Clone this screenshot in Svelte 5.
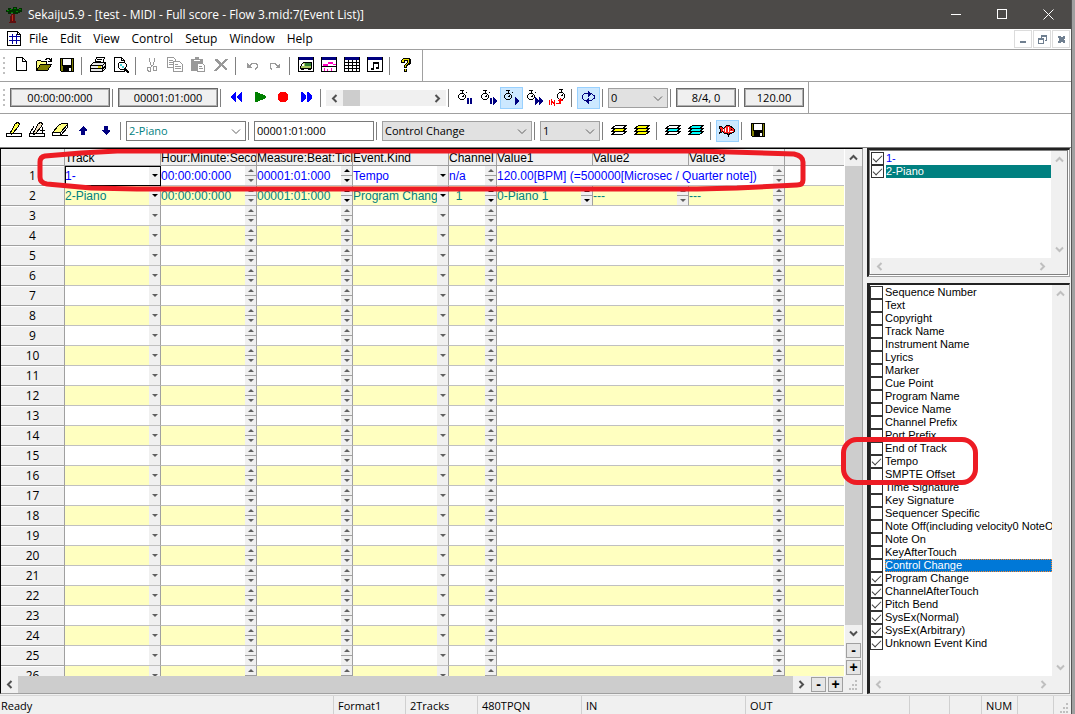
<script lang="ts">
type Shape = [d: string, fill?: string, stroke?: string];

const watch = 'M3.5 4.5h3l2 2v2l-2 2h-3l-2-2v-2zM3 1.5h4M5.5 2v2M9 3.5h1M5 7.5h1l1-1';

const icons: Record<string, Shape[]> = {
    tree: [
        ['M0 3h2V1h3v1h2V0h4v2h2V1h3v4h-2v1h-2v1h-3V5H9v2H7V5H5v2H2V5H0z', '#003000'],
        ['M1 3h2v1H1zM4 2h2v1H4zM8 1h2v1H8zM13 2h2v1h-2zM10 4h2v1h-2zM5 5h2v1H5z', '#008000'],
        ['M5 7h4v7h1v2H3v-1h1v-3z', '#601010'],
        ['M6 8h1v6H6z', '#c02818'],
    ],
    score: [
        ['M.5.5h10l3 3v11H.5z', '#fff', '#000'],
        ['M10.5.5v3h3', '', '#000'],
        ['M2 5.5h11M2 9.5h11M5.5 3v10M9.5 3v10', '', '#0000a0'],
    ],
    new: [
        ['M3.5.5h6l4 4v9h-10z', '#fff', '#000'],
        ['M9.5.5v4h4', '', '#000'],
    ],
    open: [
        ['M.5 13V4.5l1-1h3l1 1h5v3', '#ffff80', '#000'],
        ['M.5 13.5l4-6h11l-4 6z', '#808000', '#000'],
        ['M9 2.5h1v-1h3v1h1v1M15.5 1v3.5H12', '', '#000'],
    ],
    save: [
        ['M1.5 1.5h13v13h-12l-1-1z', '#808000', '#000'],
        ['M4 2h8v6H4z', '#fff'],
        ['M4 9h9v6H4z', '#000'],
        ['M10 11h2v3h-2z', '#fff'],
        ['M3.5 2v6.5h9V2', '', '#000'],
    ],
    print: [
        ['M4.5 6.5l2-6h8l-2 6z', '#fff', '#000'],
        ['M7 2.5h5M6 4.5h5', '', '#000'],
        ['M.5 8.5l3-3h12v6l-3 3H.5z', '#e8e8e8', '#000'],
        ['M.5 8.5h12l3-3M12.5 8.5v6M1 11.5h11M13 11.5l3-3', '', '#000'],
        ['M8 9h3v2H8z', '#d8d000'],
    ],
    preview: [
        ['M1.5.5h7l3 3v11h-10z', '#fff', '#000'],
        ['M8.5.5v3h3', '', '#000'],
        ['M7 5h4l2 2v3l-2 2H7l-2-2V7z', '#fff', '#000'],
        ['M7 7h2v2H7zM9 9h2v2H9z', '#40d0d8'],
        ['M11 11h2v1h1v1h1v1h1v2h-2v-1h-1v-1h-1v-1h-1z', '#000'],
    ],
    cut: [
        ['M5.5 1v3.5l1 1v2l2 2M10.5 1v3.5l-1 1v2l-3 3', '', '#999'],
        ['M4.5 10h2v4h-2l-1-1v-2zM9.5 9h2l1 1v3h-3z', '', '#999'],
    ],
    copy: [
        ['M.5.5h6l2 2v8h-8z', '#fff', '#999'],
        ['M6.5 4.5h6l3 3v7h-9z', '#fff', '#999'],
        ['M2 3.5h4M2 5.5h4M2 7.5h4M8 7.5h3M8 9.5h6M8 11.5h6', '', '#999'],
    ],
    paste: [
        ['M1 2h4V0h4v2h4v4H7v8H1V3z', '#999'],
        ['M4 3h6v1H4z', '#fff'],
        ['M7.5 6.5h5l2 2v6h-7z', '#fff', '#999'],
        ['M9 9.5h3M9 11.5h4', '', '#999'],
    ],
    erase: [['M2 2h2l4 4 5-4h2v1l-5 4 4 5v1h-2L8 9l-5 5H1v-1l5-5-4-5z', '#999']],
    undo: [
        ['M3 6v5h5z', '#999'],
        ['M5 9.5l3-3h4l1 1v3l-2 2', '', '#999'],
    ],
    redo: [
        ['M13 6v5H8z', '#999'],
        ['M11 9.5l-3-3H4l-1 1v3l2 2', '', '#999'],
    ],
    trackList: [
        ['M.5.5h15v14H.5z', '#fff', '#000'],
        ['M1 0h14v3H1z', '#000080'],
        ['M2.5 9.5l3-4h8v6h-11z', '#a8c860', '#000'],
        ['M7 6h6v3H7z', '#308030'],
        ['M4 7h2v2H4z', '#fff'],
        ['M3 11h3v2H3zM10 11h3v2h-3z', '#000'],
    ],
    pianoRoll: [
        ['M.5.5h15v14H.5z', '#fff', '#000'],
        ['M1 0h14v3H1z', '#000080'],
        ['M2 7h5v2H2zM7 5h5v2H7zM12 7h3v1h-3z', '#ff00c0'],
        ['M1 9.5h14', '', '#000'],
        ['M3 11h1v3H3zM6 12h1v2H6zM10 11h1v3h-1z', '#ff00c0'],
    ],
    eventList: [
        ['M.5.5h15v14H.5z', '#fff', '#000'],
        ['M1 0h14v3H1z', '#000080'],
        ['M1 5.5h14M1 8.5h14M1 11.5h14M4.5 3v11M8.5 3v11M12.5 3v11', '', '#000'],
    ],
    notation: [
        ['M.5.5h15v14H.5z', '#fff', '#000'],
        ['M1 0h14v3H1z', '#000080'],
        ['M6 5h6v7H9v-2h2V7H7v6H4v-2h2z', '#000'],
    ],
    help: [
        ['M5 1h6l2 2v4L9 9v2H6V8l3-2V4H7v2H3V3z', '#000'],
        ['M6 2h4l1 1v3L8 8v2H7V8l3-3V3H6v2H4V3z', '#e8e000'],
        ['M6 12h3v3H6z', '#000'],
        ['M7 12h1v2H7z', '#e8e000'],
    ],
    rewind: [['M7 3v10H6l-4-4V7l4-4zM13 3v10h-1L8 9V7l4-4z', '#0000ff']],
    play: [['M3 3h2l9 4v2l-9 4H3z', '#008000']],
    record: [['M6 3h4l3 2v6l-3 2H6l-3-2V5z', '#ff0000']],
    forward: [['M3 3v10h1l4-4V7L4 3zM9 3v10h1l4-4V7l-4-4z', '#0000ff']],
    watchPause: [
        [watch, '', '#000'],
        ['M10 9h2v6h-2zM13 9h2v6h-2z', '#000080'],
    ],
    watchStep: [
        [watch, '', '#000'],
        ['M10 9h2v6h-2zM13 8l4 4-4 4z', '#000080'],
    ],
    watchPlay: [
        [watch, '', '#000'],
        ['M12 8l4 4-4 4z', '#000080'],
    ],
    watchFast: [
        [watch, '', '#000'],
        ['M9 8l4 4-4 4zM13 8l4 4-4 4z', '#000080'],
    ],
    watchIn: [
        ['M10.5 3.5h3l2 2v3l-2 2h-3l-2-2v-3zM10 .5h4M12.5 1v2M12 6.5h1l1-1', '', '#000'],
        ['M.5 11v5M2.5 16v-5l3 5v-5', '', '#ff0000'],
        ['M7 14h3v-2H8l3-3 3 3h-2v3H7z', '#ff0000'],
    ],
    loop: [
        ['M6 11.5H5l-3-2v-3l3-2h6l3 2v3l-3 2H9', '', '#000080'],
        ['M8 2l3 3-3 3zM9 8v7l-4-3z', '#000080'],
    ],
    pencil: [
        ['M4.5 10.5l5-9 2-1 2 1-1 3-6 7-2 1z', '#ffff40', '#000'],
        ['M.5 11.5h15v3H.5zM4 11.5l2 1', '#fff', '#000'],
    ],
    pencilPlus: [
        ['M.5 11.5h15v3H.5z', '#fff', '#000'],
        ['M4.5 10.5l5-9 2-1 2 1-1 3-6 7-2 1z', '#f0e0c0', '#000'],
        ['M1 11l4-7M13.5 5v6M11 8.5h5', '', '#000'],
    ],
    eraser: [
        ['M.5 10.5l6-7 3-2h6v2l-7 8z', '#ffff80', '#000'],
        ['M.5 10.5h8v3h-8zM8.5 13.5h7M8.5 10.5l7-8v3l-7 8', '#fff', '#000'],
    ],
    up: [['M8 4l4 4v1h-2v4H6V9H4V8z', '#000080']],
    down: [['M8 13l4-4V8h-2V4H6v4H4v1z', '#000080']],
    layerYellow: [
        ['M4.5 9.5h11l-4 3h-11z', '#fff', '#000'],
        ['M4.5 6.5h11l-4 3h-11z', '#ffff00', '#000'],
        ['M4.5 3.5h11l-4 3h-11z', '#fff', '#000'],
    ],
    layersYellow: [
        ['M4.5 9.5h11l-4 3h-11z', '#ffff00', '#000'],
        ['M4.5 6.5h11l-4 3h-11z', '#ffff00', '#000'],
        ['M4.5 3.5h11l-4 3h-11z', '#ffff00', '#000'],
    ],
    layerCyan: [
        ['M4.5 9.5h11l-4 3h-11z', '#fff', '#000'],
        ['M4.5 6.5h11l-4 3h-11z', '#00ffff', '#000'],
        ['M4.5 3.5h11l-4 3h-11z', '#fff', '#000'],
    ],
    layersCyan: [
        ['M4.5 9.5h11l-4 3h-11z', '#00ffff', '#000'],
        ['M4.5 6.5h11l-4 3h-11z', '#00ffff', '#000'],
        ['M4.5 3.5h11l-4 3h-11z', '#00ffff', '#000'],
    ],
    fish: [
        ['M.5 4.5h2l2 2 3-3h3l1 1 2 1 2 2v2l-3 2h-2l-1 2-1-2h-3l-2-2-3 2 1-3z', '#ff2020', '#000'],
        ['M6 6h1v4H6zM9 5h1v5H9zM4 7h1v2H4zM11 9h3v1h-3z', '#fff'],
        ['M12 7h1v1h-1z', '#000'],
    ],
};

const menus = ['File', 'Edit', 'View', 'Control', 'Setup', 'Window', 'Help'];
const mainTools = ['new', 'open', 'save', '|', 'print', 'preview', '|', 'cut', 'copy', 'paste', 'erase', '|', 'undo', 'redo', '|', 'trackList', 'pianoRoll', 'eventList', 'notation', '|', 'help'];
const playTools = ['rewind', 'play', 'record', 'forward', '|'];
const syncTools = ['watchPause', 'watchStep', 'watchPlay', 'watchFast', 'watchIn', '|', 'loop', '|'];
const editTools = ['pencil', 'pencilPlus', 'eraser', 'up', 'down', '|'];
const layerTools = ['|', 'layerYellow', 'layersYellow', '|', 'layerCyan', 'layersCyan', '|', 'fish', '|', 'save'];
const pressed = ['watchPlay', 'loop', 'fish'];

const columns = ['Track', 'Hour:Minute:Second', 'Measure:Beat:Tick', 'Event.Kind', 'Channel', 'Value1', 'Value2', 'Value3'];

interface Cell {
    text?: string;
    kind: 'drop' | 'spin';
    on?: boolean;
    span?: number;
}

const events: Cell[][] = [
    [
        { text: '1-', kind: 'drop', on: true },
        { text: '00:00:00:000', kind: 'spin' },
        { text: '00001:01:000', kind: 'spin', on: true },
        { text: 'Tempo', kind: 'drop', on: true },
        { text: 'n/a', kind: 'spin' },
        { text: '120.00[BPM] (=500000[Microsec / Quarter note])', kind: 'spin', span: 3 },
    ],
    [
        { text: '2-Piano', kind: 'drop', on: true },
        { text: '00:00:00:000', kind: 'spin' },
        { text: '00001:01:000', kind: 'spin', on: true },
        { text: 'Program Change', kind: 'drop', on: true },
        { text: '\u00a0\u00a01', kind: 'spin', on: true },
        { text: '0-Piano 1', kind: 'spin', on: true },
        { text: '---', kind: 'spin' },
        { text: '---', kind: 'spin' },
    ],
];
const blank: Cell[] = [{ kind: 'drop' }, { kind: 'spin' }, { kind: 'spin' }, { kind: 'drop' }, { kind: 'spin' }, { kind: 'spin', span: 3 }];
const rows = Array.from({ length: 26 }, (_, i) => events[i] ?? blank);

const kindNames = [
    'Sequence Number', 'Text', 'Copyright', 'Track Name', 'Instrument Name', 'Lyrics', 'Marker',
    'Cue Point', 'Program Name', 'Device Name', 'Channel Prefix', 'Port Prefix', 'End of Track',
    'Tempo', 'SMPTE Offset', 'Time Signature', 'Key Signature', 'Sequencer Specific',
    'Note Off(including velocity0 NoteOn)', 'Note On', 'KeyAfterTouch', 'Control Change',
    'Program Change', 'ChannelAfterTouch', 'Pitch Bend', 'SysEx(Normal)', 'SysEx(Arbitrary)',
    'Unknown Event Kind',
];

let tracks = $state([
    { name: '1-', checked: true },
    { name: '2-Piano', checked: true },
]);
let kinds = $state(kindNames.map((name, i) => ({ name, checked: i === 13 || i > 21 })));
let position = $state('00001:01:000');
</script>

{#snippet icon(name: string)}
    <svg class="icon" width="16" height="16" viewBox="0 0 16 16" aria-hidden="true">
        {#each icons[name] as [d, fill, stroke]}
            <path {d} fill={fill || 'none'} stroke={stroke || 'none'} />
        {/each}
    </svg>
{/snippet}

{#snippet tools(names: string[])}
    {#each names as name}
        {#if name === '|'}
            <span class="sep"></span>
        {:else}
            <button class="tool" class:pressed={pressed.includes(name)} aria-label={name}>{@render icon(name)}</button>
        {/if}
    {/each}
{/snippet}

{#snippet arrow(dir: 'up' | 'down' | 'left' | 'right')}
    <button class="arrow {dir}" aria-label="Scroll {dir}">
        <svg width="9" height="9" viewBox="0 0 9 9"><path d="M1 6.5l3.5-3.5 3.5 3.5" /></svg>
    </button>
{/snippet}

{#snippet grip()}
    <svg class="grip" width="12" height="12" viewBox="0 0 12 12" aria-hidden="true">
        <path d="M8 1h2v2H8zM5 5h2v2H5zM8 5h2v2H8zM2 9h2v2H2zM5 9h2v2H5zM8 9h2v2H8z" />
    </svg>
{/snippet}

{#snippet combo(label: string, value: string, kind: string)}
    <span class="combo {kind}">
        <select aria-label={label}><option>{value}</option></select>
        <svg width="10" height="6" viewBox="0 0 10 6" aria-hidden="true"><path d="M1 .5l4 4 4-4" /></svg>
    </span>
{/snippet}

<div class="window">
    <header class="titlebar">
        {@render icon('tree')}
        <h1>Sekaiju5.9 - [test - MIDI - Full score - Flow 3.mid:7(Event List)]</h1>
        <button aria-label="Minimize"><svg width="11" height="11"><path d="M0 5.5h10" /></svg></button>
        <button aria-label="Maximize"><svg width="11" height="11"><path d="M.5.5h9v9h-9z" /></svg></button>
        <button aria-label="Close"><svg class="smooth" width="11" height="11"><path d="M.5.5l10 10M10.5.5l-10 10" /></svg></button>
    </header>

    <nav class="menubar">
        {@render icon('score')}
        {#each menus as menu}
            <button class="menu">{menu}</button>
        {/each}
        <div class="mdi">
            <button aria-label="Minimize document"><svg width="9" height="9"><path d="M1 6h6v2H1z" /></svg></button>
            <button aria-label="Restore document">
                <svg width="9" height="9"><path d="M3 0h6v6H7V5h1V2H4v1H3zM0 3h6v6H0zM1 5v3h4V5z" fill-rule="evenodd" /></svg>
            </button>
            <button aria-label="Close document"><svg width="9" height="9"><path d="M1 1h2l1 1h1l1-1h2v2L7 4v1l1 1v2H6L5 7H4L3 8H1V6l1-1V4L1 3z" /></svg></button>
        </div>
    </nav>

    <div class="toolbar">
        <div class="band banded">
            <span class="handle"></span>
            {@render tools(mainTools)}
        </div>
    </div>

    <div class="toolbar">
        <div class="band banded">
            <span class="handle"></span>
            <output class="readout wide">00:00:00:000</output>
            <span class="sep"></span>
            <output class="readout wide">00001:01:000</output>
            <span class="sep"></span>
            {@render tools(playTools)}
            <div class="seek">
                {@render arrow('left')}
                <input type="range" min="0" max="100" value="0" aria-label="Song position" />
                {@render arrow('right')}
            </div>
            <span class="sep"></span>
            {@render tools(syncTools)}
            {@render combo('Loop', '0', 'short')}
            <span class="sep"></span>
            <output class="readout">8/4, 0</output>
            <span class="sep"></span>
            <output class="readout">120.00</output>
        </div>
    </div>

    <div class="toolbar last">
        <div class="band">
            {@render tools(editTools)}
            {@render combo('Track', '2-Piano', 'track')}
            <span class="sep"></span>
            <input class="position" type="text" aria-label="Position" bind:value={position} />
            <span class="sep"></span>
            {@render combo('Event kind', 'Control Change', 'long')}
            <span class="sep"></span>
            {@render combo('Channel', '1', 'short')}
            {@render tools(layerTools)}
        </div>
    </div>

    <main class="workspace">
        <section class="editor">
            <div class="upper">
                <div class="sheet">
                    <table>
                        <colgroup>
                            <col class="c-num" /><col class="c-std" /><col class="c-std" /><col class="c-std" /><col class="c-std" />
                            <col class="c-chan" /><col class="c-std" /><col class="c-std" /><col class="c-std" /><col />
                        </colgroup>
                        <thead>
                            <tr>
                                <th></th>
                                {#each columns as column}
                                    <th>{column}</th>
                                {/each}
                                <th class="rest"></th>
                            </tr>
                        </thead>
                        <tbody>
                            {#each rows as row, r}
                                <tr class:first={r === 0}>
                                    <th scope="row">{r + 1}</th>
                                    {#each row as cell, c}
                                        <td colspan={cell.span ?? 1} class:current={r === 0 && c === 0}>
                                            <div class="cell" class:on={cell.on}>
                                                <span>{cell.text ?? ''}</span>
                                                {#if cell.kind === 'drop'}
                                                    <button class="drop" aria-label="Choose"><i class="tri-down"></i></button>
                                                {:else}
                                                    <div class="spin">
                                                        <button aria-label="Increase"><i class="tri-up"></i></button>
                                                        <button aria-label="Decrease"><i class="tri-down"></i></button>
                                                    </div>
                                                {/if}
                                            </div>
                                        </td>
                                    {/each}
                                    <td class="rest"></td>
                                </tr>
                            {/each}
                        </tbody>
                    </table>
                </div>
                <div class="scroll-y">
                    {@render arrow('up')}
                    <div class="thumb"></div>
                    {@render arrow('down')}
                    <button class="zoom" aria-label="Zoom out rows">-</button>
                    <button class="zoom" aria-label="Zoom in rows">+</button>
                </div>
            </div>
            <div class="scroll-x">
                {@render arrow('left')}
                <div class="thumb"></div>
                {@render arrow('right')}
                <button class="zoom" aria-label="Zoom out columns">-</button>
                <button class="zoom" aria-label="Zoom in columns">+</button>
                <div class="corner">{@render grip()}</div>
            </div>
            <svg class="mark-row" width="770" height="44" viewBox="0 0 770 44" aria-hidden="true">
                <path d="M8 7L44 4 80 2H660L757 5Q766 7 766 13V31Q766 36 760 36L700 39 660 40H100L54 39 10 35Q3 34 3 28V13Q3 8 8 7Z" />
            </svg>
        </section>

        <aside class="side">
            <div class="listbox tracks">
                <div class="upper">
                    <ul>
                        {#each tracks as track, i}
                            <li class:picked={i === 1}>
                                <label><input type="checkbox" bind:checked={track.checked} /><span>{track.name}</span></label>
                            </li>
                        {/each}
                    </ul>
                    <div class="scroll-y idle">{@render arrow('up')}{@render arrow('down')}</div>
                </div>
                <div class="scroll-x idle">{@render arrow('left')}{@render arrow('right')}</div>
            </div>
            <div class="listbox kinds">
                <div class="upper">
                    <ul>
                        {#each kinds as kind}
                            <li class:picked={kind.name === 'Control Change'}>
                                <label><input type="checkbox" bind:checked={kind.checked} /><span>{kind.name}</span></label>
                            </li>
                        {/each}
                    </ul>
                    <div class="scroll-y idle">{@render arrow('up')}{@render arrow('down')}</div>
                </div>
                <div class="scroll-x idle">{@render arrow('left')}{@render arrow('right')}</div>
                <div class="mark-kind"></div>
            </div>
        </aside>
    </main>

    <footer class="status">
        <span class="ready">Ready</span>
        <span class="s72">Format1</span>
        <span class="s72">2Tracks</span>
        <span class="s104">480TPQN</span>
        <span class="s164">IN</span>
        <span class="s164">OUT</span>
        <span class="s40"></span>
        <span class="s32"></span>
        <span class="s36">NUM</span>
        <span class="s36"></span>
        <span class="s18">{@render grip()}</span>
    </footer>
</div>

<style>
    :global(body) {
        margin: 0;
        background: #a0a0a0;
    }

    .window {
        box-sizing: border-box;
        height: 100vh;
        margin-right: 3px;
        border-right: 1px solid #555;
        display: flex;
        flex-direction: column;
        background: #f0f0f0;
        color: #000;
        font: 12px/16px "Open Sans", "Noto Sans", sans-serif;
        overflow: hidden;
    }

    button {
        padding: 0;
        margin: 0;
        border: 0;
        background: none;
        color: inherit;
        font: inherit;
        display: flex;
        align-items: center;
        justify-content: center;
    }

    svg {
        display: block;
        flex: none;
        shape-rendering: crispEdges;
    }

    .icon {
        overflow: visible;
    }

    /* title and menu */
    .titlebar {
        flex: none;
        height: 29px;
        padding-left: 6px;
        display: flex;
        align-items: center;
        background: #4c4a48;
        color: #fff;
        h1 {
            flex: 1;
            margin: 0 0 0 6px;
            font-size: 12px;
            font-weight: 400;
            line-height: 18px;
            white-space: nowrap;
        }
        button {
            width: 46px;
            height: 27px;
        }
        button svg {
            fill: none;
            stroke: #fff;
        }
        .smooth {
            shape-rendering: auto;
        }
    }

    .menubar {
        flex: none;
        height: 20px;
        padding-left: 7px;
        display: flex;
        align-items: center;
        background: #fff;
        border-bottom: 1px solid #a0a0a0;
    }

    .menu {
        padding: 0 6px;
    }

    .mdi {
        margin-left: auto;
        padding-right: 1px;
        display: flex;
        gap: 1px;
        button {
            width: 18px;
            height: 18px;
            border: 1px solid #dcdcdc;
        }
        svg {
            fill: #6f7f90;
        }
    }

    /* toolbars */
    .toolbar {
        flex: none;
        height: 31px;
        background: #fff;
        border-bottom: 1px solid #a0a0a0;
        display: flex;
    }

    .toolbar.last {
        height: 33px;
        border-bottom-color: #808080;
        .band {
            padding-left: 3px;
        }
    }

    .band {
        display: flex;
        align-items: center;
    }

    .banded {
        padding: 0 4px 0 3px;
        border-right: 1px solid #a0a0a0;
    }

    .handle {
        width: 2px;
        height: 18px;
        margin-right: 5px;
        background: repeating-linear-gradient(#c0c0c0 0 2px, #fff 2px 5px);
    }

    .sep {
        width: 1px;
        height: 18px;
        margin: 0 5px 0 2px;
        background: #808080;
    }

    .tool {
        box-sizing: border-box;
        width: 23px;
        height: 22px;
        padding: 0 2px 1px 0;
    }

    .pressed {
        background: #cce8ff;
        border: 1px solid #99d1ff;
    }

    .readout {
        box-sizing: border-box;
        width: 60px;
        height: 19px;
        border: 1px solid #696969;
        outline: 1px solid #b0b0b0;
        outline-offset: -2px;
        background: #f0f0f0;
        line-height: 17px;
        font-size: 11px;
        text-align: center;
    }

    .readout.wide {
        width: 100px;
    }

    .combo {
        position: relative;
        height: 20px;
        svg {
            position: absolute;
            right: 5px;
            top: 8px;
            fill: none;
            stroke: #606060;
            shape-rendering: auto;
            pointer-events: none;
        }
        select {
            box-sizing: border-box;
            width: 100%;
            height: 20px;
            padding: 0 2px;
            appearance: none;
            border: 1px solid #a0a0a0;
            border-radius: 0;
            background: #e1e1e1;
            color: #000;
            font: 11px/18px "Open Sans", "Noto Sans", sans-serif;
        }
    }

    .short {
        width: 60px;
    }

    .long {
        width: 150px;
    }

    .track {
        width: 120px;
        select {
            background: #fff;
            border-color: #7a7a7a;
            color: #008080;
        }
    }

    .position {
        box-sizing: border-box;
        width: 120px;
        height: 20px;
        padding: 0 2px;
        border: 1px solid #7a7a7a;
        font: 11px/18px "Open Sans", "Noto Sans", sans-serif;
    }

    .seek {
        width: 120px;
        height: 16px;
        display: flex;
        background: #f0f0f0;
        input {
            flex: 1;
            min-width: 0;
            margin: 0;
            appearance: none;
            background: none;
        }
        input::-webkit-slider-thumb {
            appearance: none;
            width: 17px;
            height: 16px;
            background: #cdcdcd;
        }
    }

    /* scroll bars */
    .arrow {
        flex: none;
        width: 17px;
        height: 17px;
        svg {
            fill: none;
            stroke: #505050;
            stroke-width: 2;
            shape-rendering: auto;
        }
    }

    .idle .arrow svg {
        stroke: #bfbfbf;
    }

    .down svg {
        transform: rotate(180deg);
    }

    .left svg {
        transform: rotate(-90deg);
    }

    .right svg {
        transform: rotate(90deg);
    }

    .scroll-y {
        flex: none;
        width: 17px;
        display: flex;
        flex-direction: column;
        align-items: center;
        background: #f0f0f0;
    }

    .scroll-x {
        flex: none;
        height: 17px;
        display: flex;
        align-items: center;
        background: #f0f0f0;
    }

    .idle {
        justify-content: space-between;
    }

    .scroll-x.idle {
        padding-right: 17px;
    }

    .thumb {
        flex: 1;
        align-self: stretch;
        background: #cdcdcd;
    }

    .zoom {
        box-sizing: border-box;
        width: 15px;
        height: 15px;
        margin: 1px;
        border: 1px solid #a0a0a0;
        background: #e6e6e6;
        font: bold 14px/13px "Liberation Sans", sans-serif;
    }

    .corner {
        width: 18px;
        display: flex;
        justify-content: center;
    }

    .grip {
        fill: #bfbfbf;
    }

    /* event sheet */
    .workspace {
        flex: 1;
        min-height: 0;
        display: flex;
        gap: 4px;
        padding-right: 1px;
        font: 12px/16px "Liberation Sans", Arial, sans-serif;
    }

    .editor {
        position: relative;
        flex: 1;
        min-width: 0;
        display: flex;
        flex-direction: column;
        border: 1px solid #a0a0a0;
        border-top-color: #000;
        border-left-color: #000;
    }

    .upper {
        flex: 1;
        min-height: 0;
        display: flex;
    }

    .sheet {
        flex: 1;
        min-width: 0;
        overflow: hidden;
        background: #fff;
        border-right: 1px solid #fff;
    }

    table {
        width: 100%;
        table-layout: fixed;
        border-collapse: separate;
        border-spacing: 0;
    }

    .c-num {
        width: 64px;
    }

    .c-std {
        width: 96px;
    }

    .c-chan {
        width: 48px;
    }

    th,
    td {
        box-sizing: border-box;
        padding: 0;
        border-right: 1px solid #a0a0a0;
        border-bottom: 1px solid #c0c0c0;
        font-weight: 400;
        white-space: nowrap;
        overflow: hidden;
    }

    thead th {
        height: 17px;
        padding-top: 2px;
        line-height: 14px;
        background: #f0f0f0;
        border-bottom-color: #a0a0a0;
        text-align: left;
    }

    tbody th {
        background: #f0f0f0;
        border-bottom-color: #a0a0a0;
        box-shadow: inset 0 1px #fff;
        font: 12px/19px "Open Sans", "Noto Sans", sans-serif;
    }

    tbody tr {
        height: 20px;
        color: #008080;
    }

    tbody tr:nth-child(even) {
        background: #ffffc0;
    }

    tbody tr.first {
        color: #0000ff;
    }

    tbody th {
        color: #000;
    }

    .rest {
        border-right: 0;
    }

    .current {
        outline: 1px solid #000;
        outline-offset: -1px;
    }

    .cell {
        height: 19px;
        display: flex;
        span {
            flex: 1;
            min-width: 0;
            overflow: hidden;
            line-height: 20px;
        }
    }

    .drop {
        width: 11px;
        background: #f0f0f0;
    }

    .spin {
        width: 11px;
        display: flex;
        flex-direction: column;
        gap: 1px;
        background: #a0a0a0;
        button {
            flex: 1;
            background: #f0f0f0;
        }
    }

    .tri-up,
    .tri-down {
        border: 3px solid transparent;
    }

    .tri-up {
        border-top: 0;
        border-bottom-color: #606060;
    }

    .tri-down {
        border-bottom: 0;
        border-top-color: #606060;
    }

    .on .tri-up {
        border-bottom-color: #000;
    }

    .on .tri-down {
        border-top-color: #000;
    }

    .mark-row {
        position: absolute;
        left: 36px;
        top: 0;
        fill: none;
        stroke: #ed1c24;
        stroke-width: 5;
        pointer-events: none;
        shape-rendering: auto;
    }

    /* side lists */
    .side {
        flex: none;
        width: 203px;
        display: flex;
        flex-direction: column;
        gap: 6px;
        font-size: 11px;
        line-height: 13px;
    }

    .listbox {
        position: relative;
        display: flex;
        flex-direction: column;
        background: #fff;
        border: 1px solid #a0a0a0;
        border-left: 3px solid #222;
        border-top: 2px solid #222;
        ul {
            flex: 1;
            min-width: 0;
            margin: 0;
            padding: 1px 0 0;
            list-style: none;
            overflow: hidden;
        }
        label {
            display: flex;
            gap: 2px;
        }
        label span {
            flex: 1;
            min-width: 0;
            overflow: hidden;
            white-space: nowrap;
        }
        input {
            flex: none;
            box-sizing: border-box;
            width: 13px;
            height: 13px;
            margin: 0;
            appearance: none;
            border: 1px solid #333;
            background: #fff;
        }
        input:checked::before {
            content: "";
            display: block;
            width: 8px;
            height: 4px;
            margin: 2px 0 0 1px;
            border: solid #404040;
            border-width: 0 0 1px 1px;
            transform: rotate(-45deg);
        }
    }

    .tracks {
        flex: none;
        height: 124px;
        border-left-width: 2px;
        outline: 1px solid #808080;
        outline-offset: -3px;
        padding: 1px 1px 1px 2px;
        li {
            color: #0000ff;
        }
        .picked span {
            background: #008080;
            color: #fff;
        }
    }

    .kinds {
        flex: 1;
        min-height: 0;
        .picked span {
            background: #0078d7;
            color: #fff;
            outline: 1px dotted #ff8728;
            outline-offset: -1px;
        }
    }

    .mark-kind {
        position: absolute;
        left: -29px;
        top: 152px;
        width: 127px;
        height: 38px;
        border: 5px solid #ed1c24;
        border-radius: 16px;
        pointer-events: none;
    }

    /* status bar */
    .status {
        flex: none;
        height: 18px;
        margin-top: 1px;
        border-top: 1px solid #d7d7d7;
        display: flex;
        span {
            box-sizing: border-box;
            padding-left: 4px;
            border-left: 1px solid #d0d0d0;
            line-height: 20px;
            white-space: nowrap;
            font-size: 11px;
        }
        .ready {
            flex: 1;
            padding-left: 1px;
            border-left: 0;
        }
        .s72 {
            width: 72px;
        }
        .s104 {
            width: 104px;
        }
        .s164 {
            width: 164px;
        }
        .s40 {
            width: 40px;
        }
        .s32 {
            width: 32px;
        }
        .s36 {
            width: 36px;
        }
        .s18 {
            width: 18px;
            padding-top: 6px;
        }
    }
</style>
